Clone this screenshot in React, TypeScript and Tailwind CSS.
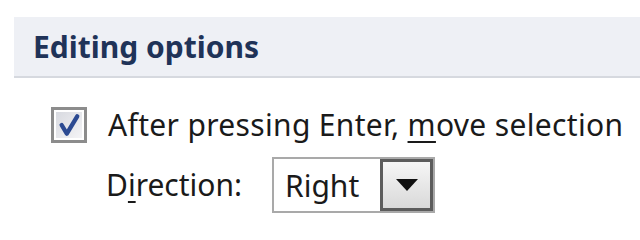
import React from 'react';

/**
 * Excel-style "Editing options" fragment
 */
const CheckMark: React.FC = () => (
  <svg viewBox="0 0 30 30" className="w-full h-full">
    <path d="M6.5 15 L12.5 25 L24.5 5" fill="none" stroke="#2c4a92" strokeWidth="5" strokeLinecap="round" strokeLinejoin="round" />
  </svg>
);

export default function App() {
  return (
    <div
      className="w-[640px] h-[222px] bg-white overflow-hidden text-[#1a1a1a]"
      style={{ fontFamily: '"Noto Sans", "Open Sans", sans-serif' }}
    >
      {/* section header */}
      <div className="mt-[17px] ml-[14px] h-[61px] bg-[#eef0f5] border-b-2 border-[#d6d9df] flex items-center pl-[19px]">
        <span className="text-[30px] font-bold text-[#1f3358]">Editing options</span>
      </div>

      {/* checkbox row */}
      <div className="mt-[29px] ml-[51px] flex items-center h-[36px]">
        <div className="w-[36px] h-[36px] border-[3px] border-[#8c8c8c] bg-white p-[2px]">
          <div className="w-full h-full bg-gradient-to-br from-[#d8dae0] to-[#f4f4f6]">
            <CheckMark />
          </div>
        </div>
        <span className="ml-[21px] text-[30px] leading-none tracking-[0.33px]">
          After pressing Enter, <u className="underline-offset-[5px] decoration-2">m</u>ove selection
        </span>
      </div>

      {/* direction row */}
      <div className="mt-[14px] ml-[106px] flex items-center">
        <span className="text-[30px] leading-none w-[166px]">
          D<u className="underline-offset-[5px] decoration-2">i</u>rection:
        </span>
        <div className="flex h-[56px] w-[163px] border-2 border-[#a9a9a9] bg-white">
          <div className="flex-1 flex items-center pl-[11px] text-[30px]">Right</div>
          <div className="w-[53px] h-full border-[3px] border-[#5c5c5c] bg-gradient-to-b from-[#f6f6f6] to-[#d9d9d9] flex items-center justify-center">
            <svg viewBox="0 0 22 12" className="w-[22px] h-[12px]">
              <path d="M0 0 H22 L11 12 Z" fill="#111" />
            </svg>
          </div>
        </div>
      </div>
    </div>
  );
}
